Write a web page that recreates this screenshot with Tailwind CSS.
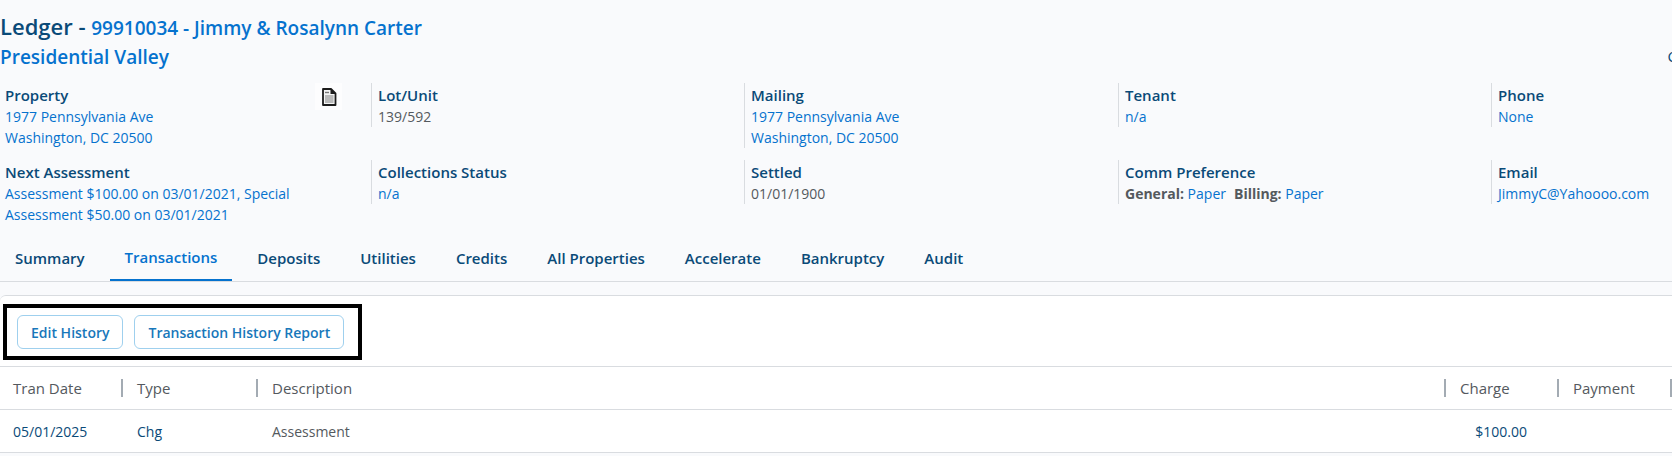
<!DOCTYPE html>
<html lang="en">
<head>
<meta charset="utf-8">
<title>Ledger - 99910034</title>
<script src="https://cdn.jsdelivr.net/npm/@tailwindcss/browser@4"></script>
</head>
<body class="min-h-screen overflow-x-hidden bg-[#f9fafc] font-['Segoe_UI','Open_Sans',sans-serif] text-[14px] leading-[21px] text-[#54595e]">
<header class="flex items-end justify-between overflow-hidden pt-[10px]">
  <div>
    <h1 class="text-[22px] leading-8 font-semibold text-[#0a4a78]">Ledger - <a href="#" class="text-[19px] font-semibold text-[#0572ce]">99910034 - Jimmy &amp; Rosalynn Carter</a></h1>
    <a href="#" class="block text-[19px] leading-[27px] font-semibold text-[#0572ce]">Presidential Valley</a>
  </div>
  <a href="#" class="-mr-[5px] pb-1 text-[15px] text-[#0a4a78]">C</a>
</header>

<section class="mt-[12px] grid grid-cols-[371fr_373fr_374fr_373fr_181fr] items-start gap-y-3">
  <div class="flex justify-between pl-[5px] text-[#0572ce]">
    <div>
      <h2 class="pt-[2px] text-[15px] font-semibold text-[#0a4a78]">Property</h2>
      <a href="#" class="block">1977 Pennsylvania Ave<br>Washington, DC 20500</a>
    </div>
    <button type="button" aria-label="Notes" class="mr-[29px] flex size-[27px] items-center justify-center bg-white/60">
      <svg width="16" height="18" viewBox="0 0 16 18" fill="none"><path d="M2 1h8l4.500 4.500V17H2z" fill="#f4f4f4" stroke="#1c1c1c" stroke-width="1.8" stroke-linejoin="round"/><path d="M9.500 1v5H15L10 .8z" fill="#1c1c1c"/><path d="M4 4.500h4" stroke="#777" stroke-width="1.400"/><path d="M4 7.500h8.500v1H4zM4 9.500h8.500v1H4zM4 11.500h8.500v1H4zM4 13.500h8.500v1H4z" fill="#808080"/></svg>
    </button>
  </div>
  <div class="border-l border-[#d9dce0] pl-[6px]">
    <h2 class="pt-[2px] text-[15px] font-semibold text-[#0a4a78]">Lot/Unit</h2>
    <p>139/592</p>
  </div>
  <div class="border-l border-[#d9dce0] pl-[6px]">
    <h2 class="pt-[2px] text-[15px] font-semibold text-[#0a4a78]">Mailing</h2>
    <a href="#" class="block text-[#0572ce]">1977 Pennsylvania Ave<br>Washington, DC 20500</a>
  </div>
  <div class="border-l border-[#d9dce0] pl-[6px]">
    <h2 class="pt-[2px] text-[15px] font-semibold text-[#0a4a78]">Tenant</h2>
    <a href="#" class="block text-[#0572ce]">n/a</a>
  </div>
  <div class="border-l border-[#d9dce0] pl-[6px]">
    <h2 class="pt-[2px] text-[15px] font-semibold text-[#0a4a78]">Phone</h2>
    <a href="#" class="block text-[#0572ce]">None</a>
  </div>

  <div class="pl-[5px]">
    <h2 class="pt-[2px] text-[15px] font-semibold text-[#0a4a78]">Next Assessment</h2>
    <a href="#" class="block text-[#0572ce]">Assessment $100.00 on 03/01/2021, Special<br>Assessment $50.00 on 03/01/2021</a>
  </div>
  <div class="border-l border-[#d9dce0] pl-[6px]">
    <h2 class="pt-[2px] text-[15px] font-semibold text-[#0a4a78]">Collections Status</h2>
    <a href="#" class="block text-[#0572ce]">n/a</a>
  </div>
  <div class="border-l border-[#d9dce0] pl-[6px]">
    <h2 class="pt-[2px] text-[15px] font-semibold text-[#0a4a78]">Settled</h2>
    <p>01/01/1900</p>
  </div>
  <div class="border-l border-[#d9dce0] pl-[6px]">
    <h2 class="pt-[2px] text-[15px] font-semibold text-[#0a4a78]">Comm Preference</h2>
    <p class="flex gap-2"><span><b>General:</b> <a href="#" class="text-[#0572ce]">Paper</a></span><span><b>Billing:</b> <a href="#" class="text-[#0572ce]">Paper</a></span></p>
  </div>
  <div class="border-l border-[#d9dce0] pl-[6px]">
    <h2 class="pt-[2px] text-[15px] font-semibold text-[#0a4a78]">Email</h2>
    <a href="#" class="block text-[#0572ce]">JimmyC@Yahoooo.com</a>
  </div>
</section>

<nav class="mt-[11px] flex h-[46px] gap-[10px] border-b border-[#d9dce0] text-[15px] font-semibold text-[#0a4a78]">
  <a href="#" class="flex items-center px-[15px]">Summary</a>
  <a href="#" aria-current="page" class="flex items-center border-b-2 border-[#0572ce] px-[15px] text-[#0572ce]">Transactions</a>
  <a href="#" class="flex items-center px-[15px]">Deposits</a>
  <a href="#" class="flex items-center px-[15px]">Utilities</a>
  <a href="#" class="flex items-center px-[15px]">Credits</a>
  <a href="#" class="flex items-center px-[15px]">All Properties</a>
  <a href="#" class="flex items-center px-[15px]">Accelerate</a>
  <a href="#" class="flex items-center px-[15px]">Bankruptcy</a>
  <a href="#" class="flex items-center px-[15px]">Audit</a>
</nav>

<main class="mt-[13px] rounded-tl-md border-t border-[#d9dce0] bg-white">
  <div class="px-[3px] pt-2 pb-[6px]">
    <div class="flex w-fit gap-[11px] border-4 border-black py-[7px] pr-[14px] pl-[10px] text-[14px] font-semibold text-[#1877ba]">
      <button type="button" class="h-[34px] rounded-md border border-[#9fd0ee] px-[13px]">Edit History</button>
      <button type="button" class="h-[34px] rounded-md border border-[#9fd0ee] px-[13px]">Transaction History Report</button>
    </div>
  </div>
  <table class="w-full table-fixed border-collapse text-left">
    <colgroup><col class="w-[123px]"><col class="w-[135px]"><col><col class="w-[113px]"><col class="w-[113px]"></colgroup>
    <thead class="text-[15px]">
      <tr class="h-[43px] border-y border-[#d9dce0]">
        <th class="pl-[13px] font-normal"><div class="h-[18px] border-r-2 border-[#a3abb3] leading-[18px]">Tran Date</div></th>
        <th class="pl-[14px] font-normal"><div class="h-[18px] border-r-2 border-[#a3abb3] leading-[18px]">Type</div></th>
        <th class="pl-[14px] font-normal"><div class="h-[18px] border-r-2 border-[#a3abb3] leading-[18px]">Description</div></th>
        <th class="pl-[14px] font-normal"><div class="h-[18px] border-r-2 border-[#a3abb3] leading-[18px]">Charge</div></th>
        <th class="pl-[14px] font-normal"><div class="h-[18px] border-r-2 border-[#a3abb3] leading-[18px]">Payment</div></th>
      </tr>
    </thead>
    <tbody>
      <tr class="h-[43px] border-b border-[#d9dce0]">
        <td class="pl-[13px] text-[#0a4a78]">05/01/2025</td>
        <td class="pl-[14px] text-[#0a4a78]">Chg</td>
        <td class="pl-[14px]">Assessment</td>
        <td class="pr-8 text-right text-[#0a4a78]">$100.00</td>
        <td></td>
      </tr>
    </tbody>
  </table>
</main>
</body>
</html>
